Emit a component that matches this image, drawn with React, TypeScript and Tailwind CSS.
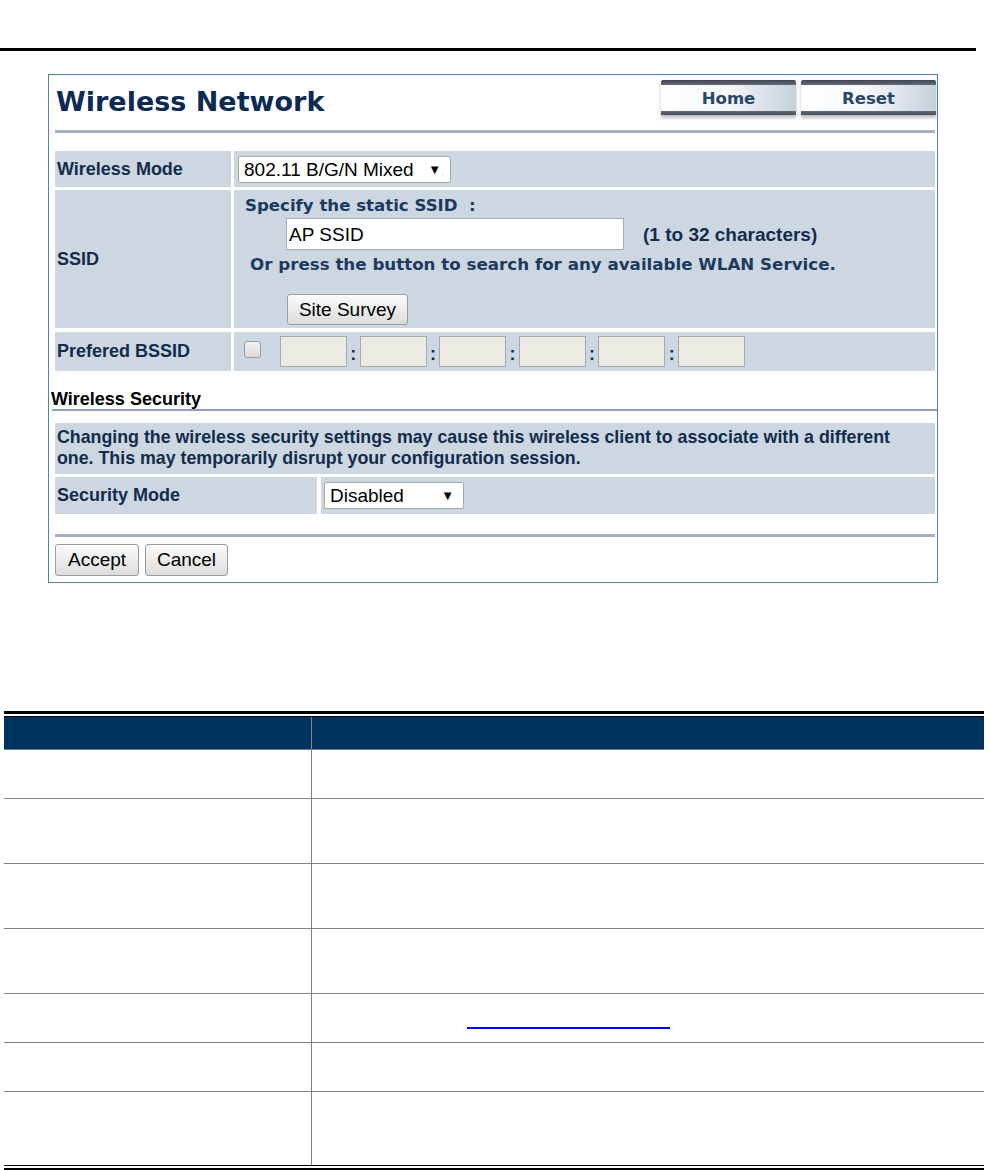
import React from "react";

const ROW_BG = "bg-[#cdd7e2]";

function Label({ children, w }: { children: React.ReactNode; w: string }) {
  return (
    <div
      className={`${ROW_BG} ${w} shrink-0 flex items-center pl-[2px] font-['Liberation_Sans',Arial,sans-serif] font-bold text-[18px] text-[#132c4c]`}
    >
      {children}
    </div>
  );
}

function FakeSelect({ text, w }: { text: string; w: string }) {
  return (
    <div
      className={`${w} h-[27px] bg-white border border-[#a6a6a6] rounded-[2px] flex items-center justify-between pl-[5px] pr-[9px] font-['Liberation_Sans',Arial,sans-serif] text-[19px] text-black leading-none`}
    >
      <span>{text}</span>
      <span className="text-[13px] leading-none">▼</span>
    </div>
  );
}

function GrayButton({ children, w, h = "h-[32px]" }: { children: React.ReactNode; w: string; h?: string }) {
  return (
    <div
      className={`${w} ${h} flex items-center justify-center rounded-[3px] border border-[#9c9c9c] bg-gradient-to-b from-[#fbfbfb] to-[#dcdcdc] font-['Liberation_Sans',Arial,sans-serif] text-[19px] text-black leading-none`}
    >
      {children}
    </div>
  );
}

function NavButton({ children }: { children: React.ReactNode }) {
  return (
    <div className="w-[135px] h-[35px] shadow-[0_3px_3px_rgba(60,70,85,0.35)]">
      <div className="h-[5px] rounded-t-[2px] bg-gradient-to-b from-[#3f4652] to-[#646c78]" />
      <div className="h-[26px] flex items-center justify-center pt-[3px] bg-gradient-to-r from-[#ffffff] via-[#f4f6f9] to-[#c6cfdb] font-['DejaVu_Sans',Verdana,sans-serif] font-bold text-[16.5px] text-[#2a4769] leading-none">
        {children}
      </div>
      <div className="h-[4px] bg-gradient-to-b from-[#646c78] to-[#454c57]" />
    </div>
  );
}

function BssidBox() {
  return <div className="w-[67px] h-[31px] bg-[#ebebe4] border border-[#a9a9a9]" />;
}

function Colon() {
  return (
    <div className="w-[12.6px] flex items-end justify-center pb-[4px] font-['Liberation_Sans',Arial,sans-serif] font-bold text-[18px] text-[#132c4c] leading-none">
      :
    </div>
  );
}

function TRow({ h, children }: { h: string; children?: React.ReactNode }) {
  return (
    <div className={`flex ${h} border-b border-[#808080]`}>
      <div className="w-[308px] shrink-0 border-r border-[#808080]" />
      <div className="flex-1">{children}</div>
    </div>
  );
}

export default function App() {
  return (
    <div className="relative w-[990px] h-[1170px] overflow-hidden bg-white">
      <div className="pt-[48px]">
        <div className="h-[3px] w-[976px] bg-black" />
      </div>

      {/* Panel */}
      <div className="ml-[48px] mt-[23px] w-[890px] border border-[#4f81bd] bg-white flex flex-col pb-[6px]">
        {/* Header */}
        <div className="h-[55px] flex justify-between">
          <div className="pl-[7px] pt-[11px] font-['DejaVu_Sans',Verdana,sans-serif] font-bold text-[27px] leading-[32px] text-[#0d2b52]">
            Wireless Network
          </div>
          <div className="flex gap-[5px] pt-[5px] pr-[1px]">
            <NavButton>Home</NavButton>
            <NavButton>Reset</NavButton>
          </div>
        </div>
        <div className="ml-[6px] mr-[2px] h-[3px] bg-[#a3b1c3]" />

        {/* Rows */}
        <div className="ml-[6px] mr-[2px] mt-[18px] flex flex-col">
          <div className="flex gap-[3px] h-[36px]">
            <Label w="w-[176px]">Wireless Mode</Label>
            <div className={`${ROW_BG} flex-1 flex items-center pl-[4px]`}>
              <FakeSelect text="802.11 B/G/N Mixed" w="w-[213px]" />
            </div>
          </div>

          <div className="flex gap-[3px] h-[138px] mt-[3px]">
            <Label w="w-[176px]">SSID</Label>
            <div className={`${ROW_BG} flex-1 flex flex-col`}>
              <div className="pl-[11px] pt-[6px] font-['DejaVu_Sans',Verdana,sans-serif] font-bold text-[16.6px] leading-[20px] text-[#1b3a5e] whitespace-pre">
                {"Specify the static SSID  :"}
              </div>
              <div className="flex items-center mt-[2px] ml-[52px]">
                <div className="w-[338px] h-[32px] bg-white border border-[#a9a9a9] flex items-center pl-[2px] font-['Liberation_Sans',Arial,sans-serif] text-[19px] text-black leading-none">
                  AP SSID
                </div>
                <div className="ml-[19px] font-['Liberation_Sans',Arial,sans-serif] font-bold text-[19px] text-[#132c4c] leading-none">
                  (1 to 32 characters)
                </div>
              </div>
              <div className="pl-[16px] mt-[4px] font-['DejaVu_Sans',Verdana,sans-serif] font-bold text-[16.7px] leading-[20px] text-[#1b3a5e] whitespace-nowrap">
                Or press the button to search for any available WLAN Service.
              </div>
              <div className="ml-[53px] mt-[20px]">
                <GrayButton w="w-[121px]" h="h-[31px]">Site Survey</GrayButton>
              </div>
            </div>
          </div>

          <div className="flex gap-[3px] h-[39px] mt-[4px]">
            <Label w="w-[176px]">Prefered BSSID</Label>
            <div className={`${ROW_BG} flex-1 flex items-center`}>
              <div className="ml-[10px] w-[17px] h-[17px] rounded-[3px] border border-[#9a9a9a] bg-gradient-to-b from-[#f4f4f4] to-[#d9d9d9] -mt-[4px]" />
              <div className="ml-[19px] flex">
                <BssidBox />
                <Colon />
                <BssidBox />
                <Colon />
                <BssidBox />
                <Colon />
                <BssidBox />
                <Colon />
                <BssidBox />
                <Colon />
                <BssidBox />
              </div>
            </div>
          </div>
        </div>

        {/* Wireless Security */}
        <div className="h-[38px] flex items-end pl-[2px]">
          <div className="font-['Liberation_Sans',Arial,sans-serif] font-bold text-[18px] leading-[20px] text-black">
            Wireless Security
          </div>
        </div>
        <div className="ml-[3px] h-[1.5px] bg-[#8a9fba]" />

        <div className="ml-[6px] mr-[2px] mt-[12px] flex flex-col">
          <div className={`${ROW_BG} h-[51px] flex items-center pl-[2px] font-['Liberation_Sans',Arial,sans-serif] font-bold text-[17.8px] leading-[21px] text-[#132c4c]`}>
            <div>
              Changing the wireless security settings may cause this wireless client to associate with a different
              <br />
              one. This may temporarily disrupt your configuration session.
            </div>
          </div>
          <div className="flex gap-[4px] h-[37px] mt-[3px]">
            <Label w="w-[262px]">Security Mode</Label>
            <div className={`${ROW_BG} flex-1 flex items-center pl-[3px]`}>
              <FakeSelect text="Disabled" w="w-[140px]" />
            </div>
          </div>
        </div>

        <div className="ml-[6px] mr-[2px] mt-[20px] h-[3px] bg-[#a3b1c3]" />

        <div className="ml-[6px] mt-[7px] flex gap-[6px]">
          <GrayButton w="w-[84px]">Accept</GrayButton>
          <GrayButton w="w-[83px]">Cancel</GrayButton>
        </div>
      </div>

      {/* Description table */}
      <div className="ml-[4px] mt-[128px] w-[980px]">
        <div className="h-[3px] bg-black" />
        <div className="h-[2px]" />
        <div className="h-[1px] bg-black" />
        <div className="flex h-[33px] bg-[#00335f] border-b border-[#6d7887]">
          <div className="w-[308px] shrink-0 border-r border-[#7f8a99]" />
          <div className="flex-1" />
        </div>
        <TRow h="h-[49px]" />
        <TRow h="h-[65px]" />
        <TRow h="h-[65px]" />
        <TRow h="h-[65px]" />
        <TRow h="h-[49px]">
          <div className="ml-[155px] mt-[33px] w-[203px] h-[2px] bg-[#0000ff]" />
        </TRow>
        <TRow h="h-[49px]" />
        <div className="flex h-[73px]">
          <div className="w-[308px] shrink-0 border-r border-[#808080]" />
          <div className="flex-1" />
        </div>
        <div className="h-[1px] bg-black" />
        <div className="h-[2px]" />
        <div className="h-[4px] bg-black" />
      </div>
    </div>
  );
}
